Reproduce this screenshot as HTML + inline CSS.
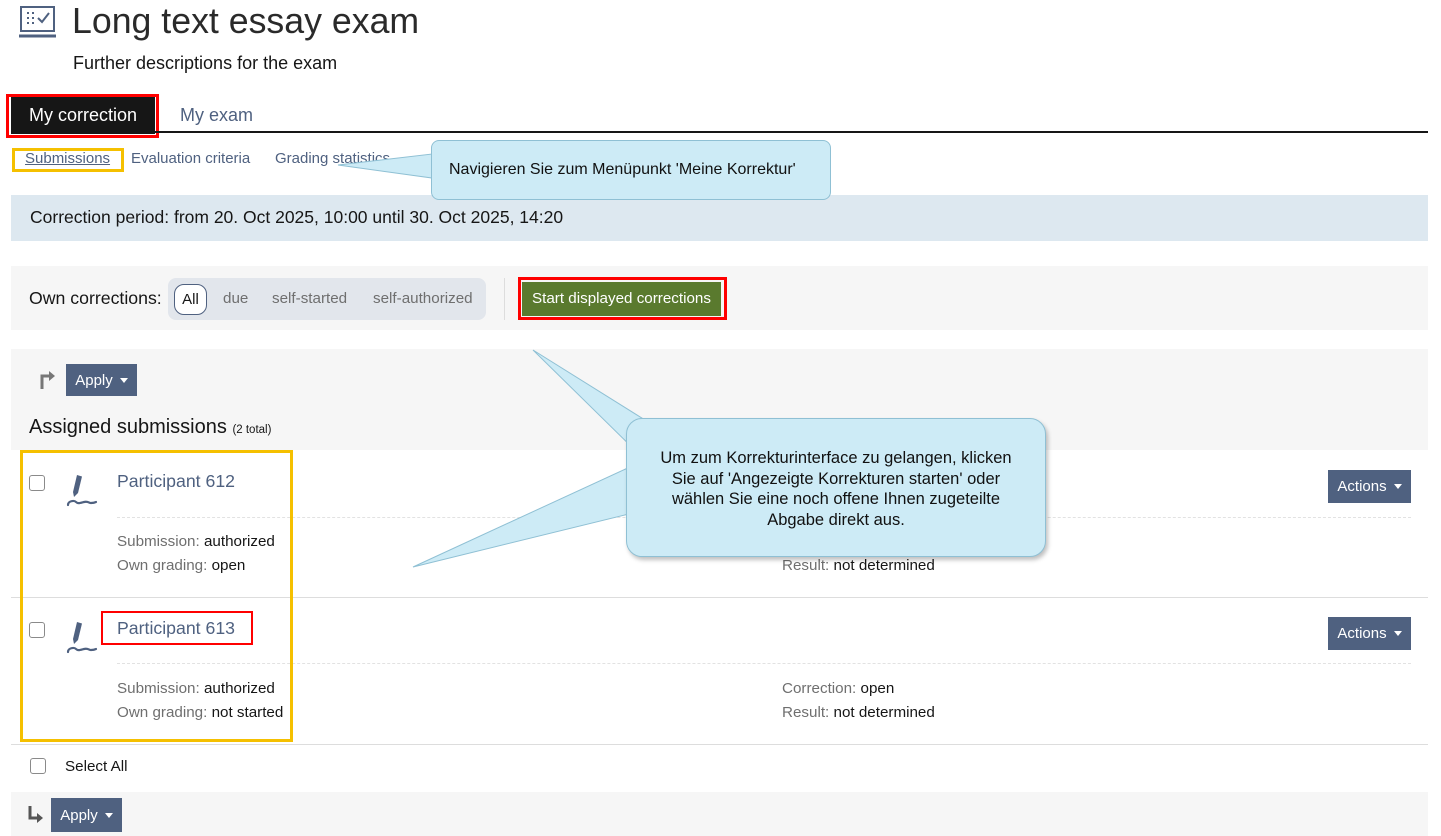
<!DOCTYPE html>
<html><head><meta charset="utf-8"><style>
*{box-sizing:border-box;margin:0;padding:0}
body{width:1441px;height:836px;position:relative;overflow:hidden;background:#fff;font-family:"Liberation Sans","DejaVu Sans",sans-serif;color:#161616}
.a{position:absolute;white-space:nowrap}
.gray{color:#6f6f6f}
.btn{position:absolute;background:#4f6180;color:#fff;font-size:15px;display:flex;align-items:center;justify-content:center}
.caret{display:inline-block;width:0;height:0;border-left:4px solid transparent;border-right:4px solid transparent;border-top:5px solid #fff;margin-left:7px}
.cb{position:absolute;width:16px;height:16px;border:1px solid #8a8a8a;border-radius:3px;background:#fff}
.call{position:absolute;background:#cdebf6;border:1px solid #8fc0d4;font-family:"Liberation Sans",Arial,sans-serif;color:#111}
.f15{font-size:15.2px}
</style></head><body>
<svg class="a" style="left:19px;top:5px" width="37" height="34" viewBox="0 0 37 34" fill="none" stroke="#4f6180" stroke-width="2">
<rect x="2" y="2" width="33" height="24"/><line x1="0" y1="31" x2="37" y2="31" stroke-width="3"/>
<path d="M8 8h2M8 13h2M8 18h2M13 8h2M13 13h2M13 18h2M19 13l4 4 7-9"/></svg>
<div class="a" style="left:72px;top:1px;font-size:35.7px;color:#2a2a2a">Long text essay exam</div>
<div class="a" style="left:73px;top:53px;font-size:18px">Further descriptions for the exam</div>
<div class="a" style="left:11px;top:97px;width:144px;height:37px;background:#161616"></div>
<div class="a" style="left:6px;top:94px;width:153px;height:44px;border:3px solid #f00"></div>
<div class="a" style="left:29px;top:105px;font-size:18px;color:#fff">My correction</div>
<div class="a" style="left:180px;top:105px;font-size:18px;color:#4f6180">My exam</div>
<div class="a" style="left:155px;top:131px;width:1273px;height:2px;background:#161616"></div>
<div class="a" style="left:25px;top:150px;font-size:15px;color:#4f6180;text-decoration:underline">Submissions</div>
<div class="a" style="left:12px;top:148px;width:112px;height:24px;border:3px solid #f5c000"></div>
<div class="a" style="left:131px;top:150px;font-size:15px;color:#4f6180">Evaluation criteria</div>
<div class="a" style="left:275px;top:150px;font-size:15px;color:#4f6180">Grading statistics</div>
<div class="a" style="left:11px;top:195px;width:1417px;height:46px;background:#dde8f0"></div>
<div class="a" style="left:30px;top:207px;font-size:17.5px">Correction period: from 20. Oct 2025, 10:00 until 30. Oct 2025, 14:20</div>
<svg class="a" style="left:330px;top:150px" width="110" height="40"><polygon points="8,15 102,4 102,28" fill="#cdebf6" stroke="#8fc0d4"/></svg>
<div class="call" style="left:431px;top:140px;width:400px;height:60px;border-radius:8px;font-size:16px;padding:20px 0 0 17px">Navigieren Sie zum Menüpunkt 'Meine Korrektur'</div>
<div class="a" style="left:11px;top:266px;width:1417px;height:64px;background:#f6f6f6"></div>
<div class="a" style="left:29px;top:288px;font-size:17.7px">Own corrections:</div>
<div class="a" style="left:168px;top:278px;width:318px;height:42px;background:#e2e6ec;border-radius:8px"></div>
<div class="a" style="left:174px;top:284px;width:33px;height:31px;background:#fff;border:1px solid #4f6180;border-radius:10px;font-size:15px;text-align:center;line-height:29px">All</div>
<div class="a f15" style="left:223px;top:290px;color:#6f6f6f">due</div>
<div class="a f15" style="left:272px;top:290px;color:#6f6f6f">self-started</div>
<div class="a f15" style="left:373px;top:290px;color:#6f6f6f">self-authorized</div>
<div class="a" style="left:504px;top:278px;width:1px;height:42px;background:#ddd"></div>
<div class="a" style="left:518px;top:277px;width:209px;height:43px;border:3px solid #f00"></div>
<div class="a f15" style="left:522px;top:282px;width:199px;height:34px;background:#5a7a2e;color:#fff;text-align:center;line-height:34px">Start displayed corrections</div>
<div class="a" style="left:11px;top:349px;width:1417px;height:101px;background:#f6f6f6"></div>
<svg class="a" style="left:38px;top:370px" width="18" height="20"><path d="M4 19V6h9" fill="none" stroke="#777" stroke-width="3"/><polygon points="11,1 17,6 11,11" fill="#777"/></svg>
<div class="btn" style="left:66px;top:364px;width:71px;height:32px">Apply<span class="caret"></span></div>
<div class="a" style="left:29px;top:416px;font-size:20px">Assigned submissions <span style="font-size:11.5px">(2 total)</span></div>
<div class="a" style="left:11px;top:597px;width:1417px;height:1px;background:#ddd"></div>
<div class="a" style="left:11px;top:744px;width:1417px;height:1px;background:#ddd"></div>
<div class="a" style="left:117px;top:517px;width:1294px;border-top:1px dashed #e2e2e2"></div>
<div class="a" style="left:117px;top:663px;width:1294px;border-top:1px dashed #e2e2e2"></div>
<div class="cb" style="left:29px;top:475px"></div>
<div class="cb" style="left:29px;top:622px"></div>
<svg class="a" style="left:63px;top:474px" width="36" height="36"><polygon points="14,1 19,2.5 15,19 11,23 10,18" fill="#4f6180"/><path d="M5 31c0-4 6-5 8-3s4 1 8 0 5 1 7 1 3 0 5-1" fill="none" stroke="#4f6180" stroke-width="2.2" stroke-linecap="round"/></svg>
<svg class="a" style="left:63px;top:621px" width="36" height="36"><polygon points="14,1 19,2.5 15,19 11,23 10,18" fill="#4f6180"/><path d="M5 31c0-4 6-5 8-3s4 1 8 0 5 1 7 1 3 0 5-1" fill="none" stroke="#4f6180" stroke-width="2.2" stroke-linecap="round"/></svg>
<div class="a" style="left:117px;top:471px;font-size:17.7px;color:#4f6180">Participant 612</div>
<div class="a" style="left:117px;top:618px;font-size:17.7px;color:#4f6180">Participant 613</div>
<div class="a" style="left:101px;top:611px;width:152px;height:34px;border:2px solid #f00"></div>
<div class="a f15" style="left:117px;top:533px"><span class="gray">Submission:</span> authorized</div>
<div class="a f15" style="left:117px;top:557px"><span class="gray">Own grading:</span> open</div>
<div class="a f15" style="left:117px;top:680px"><span class="gray">Submission:</span> authorized</div>
<div class="a f15" style="left:117px;top:704px"><span class="gray">Own grading:</span> not started</div>
<div class="a f15" style="left:782px;top:557px"><span class="gray">Result:</span> not determined</div>
<div class="a f15" style="left:782px;top:680px"><span class="gray">Correction:</span> open</div>
<div class="a f15" style="left:782px;top:704px"><span class="gray">Result:</span> not determined</div>
<div class="btn" style="left:1328px;top:470px;width:83px;height:33px">Actions<span class="caret"></span></div>
<div class="btn" style="left:1328px;top:617px;width:83px;height:33px">Actions<span class="caret"></span></div>
<div class="a" style="left:20px;top:450px;width:273px;height:292px;border:3px solid #f5c000"></div>
<div class="cb" style="left:30px;top:758px"></div>
<div class="a f15" style="left:65px;top:758px">Select All</div>
<div class="a" style="left:11px;top:792px;width:1417px;height:44px;background:#f6f6f6"></div>
<svg class="a" style="left:26px;top:805px" width="18" height="20"><path d="M4 1v12h9" fill="none" stroke="#555" stroke-width="3"/><polygon points="11,8 17,13 11,18" fill="#555"/></svg>
<div class="btn" style="left:51px;top:798px;width:71px;height:34px">Apply<span class="caret"></span></div>
<svg class="a" style="left:400px;top:340px" width="260" height="240">
<polygon points="133,10 245,80 245,120" fill="#cdebf6" stroke="#8fc0d4"/>
<polygon points="13,227 245,120 245,170" fill="#cdebf6" stroke="#8fc0d4"/></svg>
<div class="call" style="left:626px;top:418px;width:420px;height:139px;border-radius:16px;font-size:16.5px;text-align:center;line-height:20.5px;padding-top:29px;box-shadow:2px 3px 4px rgba(0,0,0,.25)">Um zum Korrekturinterface zu gelangen, klicken<br>Sie auf 'Angezeigte Korrekturen starten' oder<br>wählen Sie eine noch offene Ihnen zugeteilte<br>Abgabe direkt aus.</div>
</body></html>
